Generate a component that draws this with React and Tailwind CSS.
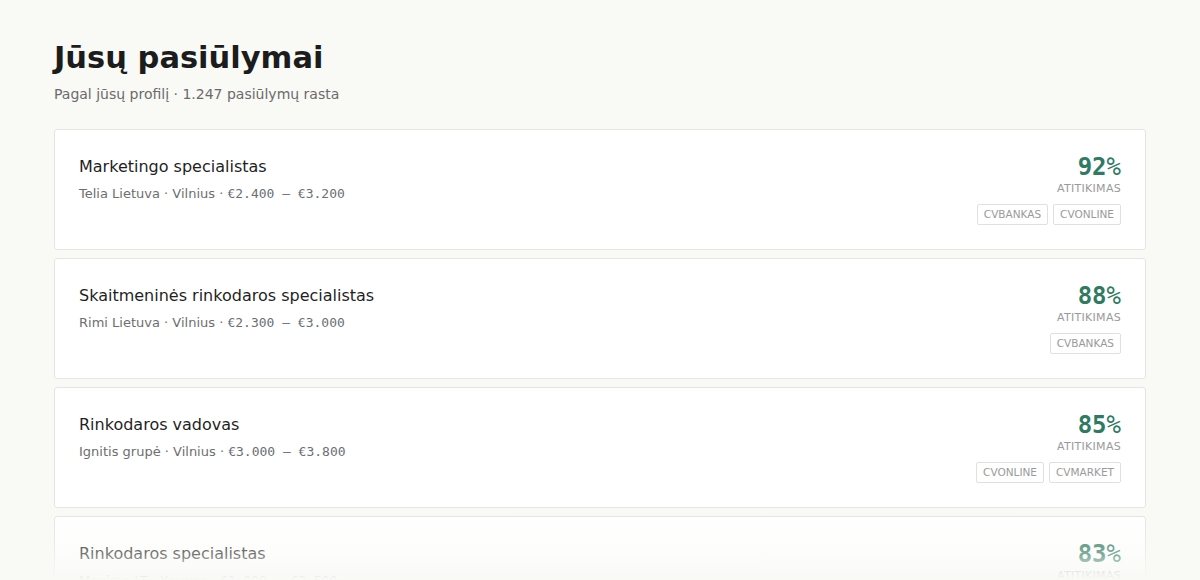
import React from 'react';

const offers = [
  { title: 'Marketingo specialistas', company: 'Telia Lietuva', city: 'Vilnius', salary: '€2.400 — €3.200', match: 92, sources: ['CVBANKAS', 'CVONLINE'] },
  { title: 'Skaitmeninės rinkodaros specialistas', company: 'Rimi Lietuva', city: 'Vilnius', salary: '€2.300 — €3.000', match: 88, sources: ['CVBANKAS'] },
  { title: 'Rinkodaros vadovas', company: 'Ignitis grupė', city: 'Vilnius', salary: '€3.000 — €3.800', match: 85, sources: ['CVONLINE', 'CVMARKET'] },
  { title: 'Rinkodaros specialistas', company: 'Maxima LT', city: 'Kaunas', salary: '€1.800 — €2.500', match: 83, sources: ['CVBANKAS'] },
];

const OfferCard = ({ offer }) => (
  <div className="flex justify-between bg-white border border-[#e6e6e0] rounded-[3px] px-6 pt-[26px] h-[121px]">
    <div>
      <h2 className="text-[16px] leading-[22px] text-[#1f1f1f]">{offer.title}</h2>
      <p className="mt-[7px] text-[13px] leading-[18px] text-[#6e6e6e]">
        {offer.company} · {offer.city} · <span className="font-['DejaVu_Sans_Mono',monospace] text-[13px] text-[#6a6f75]">{offer.salary}</span>
      </p>
    </div>
    <div className="-mt-[2px] flex flex-col items-end">
      <div className="font-['DejaVu_Sans_Mono',monospace] font-bold text-[24px] leading-[26px] text-[#2e7a62]">
        {offer.match}<span className="font-normal">%</span>
      </div>
      <div className="mt-[2px] text-[11px] leading-[14px] tracking-[0.3px] text-[#9a9a9a]">ATITIKIMAS</div>
      <div className="mt-[8px] flex gap-[5px]">
        {offer.sources.map((s) => (
          <span key={s} className="border border-[#e0e0dc] rounded-[2px] px-[6px] h-[21px] flex items-center text-[10.5px] text-[#9a9a9a]">
            {s}
          </span>
        ))}
      </div>
    </div>
  </div>
);

export default function App() {
  return (
    <div className="relative h-[580px] overflow-hidden bg-[#f9f9f6] font-['DejaVu_Sans',sans-serif]">
      <div className="px-[54px] pt-[38px]">
        <h1 className="text-[30.5px] leading-[40px] font-bold text-[#1c1c1c]">Jūsų pasiūlymai</h1>
        <p className="mt-[6px] text-[14px] leading-[20px] text-[#6b6b6b]">Pagal jūsų profilį · 1.247 pasiūlymų rasta</p>
        <div className="mt-[25px] flex flex-col gap-2">
          {offers.map((o) => (
            <OfferCard key={o.title} offer={o} />
          ))}
        </div>
      </div>
      <div className="pointer-events-none absolute left-0 right-0 bottom-0 h-[64px] bg-gradient-to-b from-[#f9f9f6]/0 via-[#f9f9f6]/40 via-60% to-[#f9f9f6]" />
    </div>
  );
}
